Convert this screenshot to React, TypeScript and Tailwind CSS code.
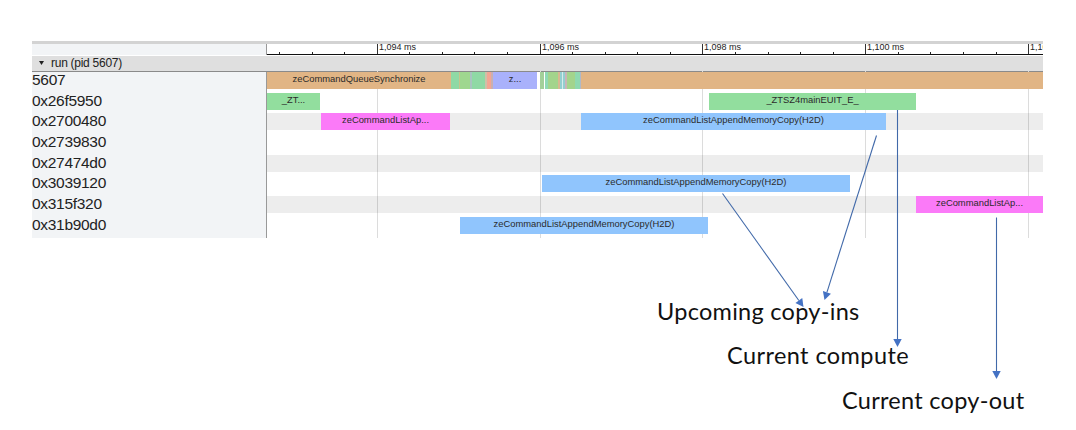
import React from "react";

type Bar = { gap: string; width: string; color: string; label?: string };
type Lane = { id: string; stripe: string; bars: Bar[] };

const blue = "bg-[#90c5fd]";
const green = "bg-[#92de9e]";
const pink = "bg-[#fb7af8]";
const copy = "zeCommandListAppendMemoryCopy(H2D)";

const lanes: Lane[] = [
  {
    id: "5607",
    stripe: "bg-transparent",
    bars: [
      { gap: "ml-0", width: "w-[184px]", color: "bg-[#e1b585]", label: "zeCommandQueueSynchronize" },
      { gap: "ml-0", width: "w-[8px]", color: "bg-[#8fd9a5]" },
      { gap: "ml-0", width: "w-[1px]", color: "bg-[#c5c48c]" },
      { gap: "ml-0", width: "w-[10px]", color: "bg-[#9fd78f]" },
      { gap: "ml-0", width: "w-[2px]", color: "bg-[#a8c4c0]" },
      { gap: "ml-0", width: "w-[13px]", color: "bg-[#8fd9a5]" },
      { gap: "ml-0", width: "w-[2px]", color: "bg-[#cfc0a8]" },
      { gap: "ml-0", width: "w-[4px]", color: "bg-[#f3a593]" },
      { gap: "ml-0", width: "w-[2px]", color: "bg-[#c9b0b0]" },
      { gap: "ml-0", width: "w-[44px]", color: "bg-[#a9b1fb]", label: "z..." },
      { gap: "ml-[3px]", width: "w-[4px]", color: "bg-[#a3d09a]" },
      { gap: "ml-[1px]", width: "w-[3px]", color: "bg-[#8fd9b5]" },
      { gap: "ml-0", width: "w-[10px]", color: "bg-[#a3d48c]" },
      { gap: "ml-0", width: "w-[2px]", color: "bg-[#d8b890]" },
      { gap: "ml-0", width: "w-[2px]", color: "bg-[#93cfd0]" },
      { gap: "ml-0", width: "w-[1px]", color: "bg-[#d5ecec]" },
      { gap: "ml-0", width: "w-[2px]", color: "bg-[#93cfd0]" },
      { gap: "ml-0", width: "w-[2px]", color: "bg-[#c8b4b8]" },
      { gap: "ml-0", width: "w-[8px]", color: "bg-[#a3d48c]" },
      { gap: "ml-0", width: "w-[5px]", color: "bg-[#8fd9b0]" },
      { gap: "ml-0", width: "w-[1px]", color: "bg-[#b0b8c8]" },
      { gap: "ml-0", width: "w-[462px]", color: "bg-[#e1b585]" },
    ],
  },
  {
    id: "0x26f5950",
    stripe: "bg-transparent",
    bars: [
      { gap: "ml-0", width: "w-[53px]", color: green, label: "_ZT..." },
      { gap: "ml-[389px]", width: "w-[207px]", color: green, label: "_ZTSZ4mainEUIT_E_" },
    ],
  },
  {
    id: "0x2700480",
    stripe: "bg-black/[0.07]",
    bars: [
      { gap: "ml-[54px]", width: "w-[129px]", color: pink, label: "zeCommandListAp..." },
      { gap: "ml-[131px]", width: "w-[305px]", color: blue, label: copy },
    ],
  },
  { id: "0x2739830", stripe: "bg-transparent", bars: [] },
  { id: "0x27474d0", stripe: "bg-black/[0.07]", bars: [] },
  {
    id: "0x3039120",
    stripe: "bg-transparent",
    bars: [{ gap: "ml-[275px]", width: "w-[308px]", color: blue, label: copy }],
  },
  {
    id: "0x315f320",
    stripe: "bg-black/[0.07]",
    bars: [{ gap: "ml-[649px]", width: "w-[127px]", color: pink, label: "zeCommandListAp..." }],
  },
  {
    id: "0x31b90d0",
    stripe: "bg-transparent",
    bars: [{ gap: "ml-[193px]", width: "w-[248px]", color: blue, label: copy }],
  },
];

const majors = [
  { x: 110, label: "1,094 ms" },
  { x: 273, label: "1,096 ms" },
  { x: 435, label: "1,098 ms" },
  { x: 598, label: "1,100 ms" },
  { x: 761, label: "1,102 ms" },
];
const minors = Array.from({ length: 24 }, (_, i) => Math.round(12 + i * 32.57));

function Ruler() {
  return (
    <svg width="776" height="11" className="block" fontFamily="Liberation Sans, sans-serif" fontSize="9">
      {minors.map((x) => (
        <rect key={x} x={x} y="8" width="1" height="3" fill="#222" />
      ))}
      {majors.map(({ x, label }) => (
        <g key={x}>
          <rect x={x} y="0" width="1" height="11" fill="#333" />
          <text x={x + 2} y="6" fill="#222">
            {label}
          </text>
        </g>
      ))}
      <rect x="0" y="10" width="776" height="1" fill="#111" />
    </svg>
  );
}

function Gridlines() {
  return (
    <svg className="absolute left-0 -top-px -z-10" width="776" height="167">
      {majors.map(({ x }) => (
        <rect key={x} x={x} y="0" width="1" height="167" fill="#dcdcdc" />
      ))}
    </svg>
  );
}

function Track({ lane }: { lane: Lane }) {
  return (
    <div className="h-[20.7px]">
      <div className={`flex h-[17px] overflow-hidden ${lane.stripe}`}>
        {lane.bars.map((b, i) => (
          <div
            key={i}
            className={`h-[17px] shrink-0 overflow-hidden whitespace-nowrap text-center text-[9.4px] leading-[14.5px] text-[#2b2b2b] ${b.gap} ${b.width} ${b.color}`}
          >
            {b.label}
          </div>
        ))}
      </div>
    </div>
  );
}

function Arrows() {
  const arrows = [
    [722.5, 193.5, 803.5, 307],
    [876.5, 135.5, 824.5, 300],
    [897.5, 110, 897.5, 347],
    [996.5, 217.5, 996.5, 379],
  ];
  return (
    <svg className="pointer-events-none absolute inset-0" width="1076" height="430">
      {arrows.map(([x1, y1, x2, y2], i) => {
        const len = Math.hypot(x2 - x1, y2 - y1);
        const ux = (x2 - x1) / len;
        const uy = (y2 - y1) / len;
        const bx = x2 - ux * 8;
        const by = y2 - uy * 8;
        return (
          <g key={i}>
            <line x1={x1} y1={y1} x2={bx} y2={by} stroke="#4169a9" strokeWidth="1.1" />
            <polygon
              points={`${x2},${y2} ${bx - uy * 4.2},${by + ux * 4.2} ${bx + uy * 4.2},${by - ux * 4.2}`}
              fill="#4472c4"
            />
          </g>
        );
      })}
    </svg>
  );
}

export default function App() {
  return (
    <div className="relative h-[430px] w-[1076px] overflow-hidden bg-white pl-8 pt-[41px] font-['Liberation_Sans',sans-serif]">
      <div className="w-[1011px]">
        <div className="h-[3px] bg-[#d3d3d3]" />
        <div className="flex h-[12px]">
          <div className="h-[11px] w-[235px] shrink-0 border-r border-[#999] bg-[#f2f4f6]" />
          <Ruler />
        </div>
        <div className="flex h-[16px] items-center border-b border-[#8a8a8a] bg-[#dfdfdf] pb-[2px] pl-[7px] text-[12px] leading-[14px] text-[#222]">
          <svg width="5" height="4" className="mr-[7px]">
            <path d="M0 0H5L2.5 4Z" fill="#222" />
          </svg>
          <span className="tracking-[-0.27px]">run (pid 5607)</span>
        </div>
        <div className="flex h-[166px]">
          <div className="w-[235px] shrink-0 border-r border-[#999] bg-[#f2f4f6] text-[15.5px] leading-[15px] tracking-[-0.3px] text-[#222]">
            {lanes.map((lane) => (
              <div key={lane.id} className="h-[20.7px]">
                {lane.id}
              </div>
            ))}
          </div>
          <div className="relative isolate w-[776px]">
            <Gridlines />
            {lanes.map((lane) => (
              <Track key={lane.id} lane={lane} />
            ))}
          </div>
        </div>
      </div>
      <div className="flex flex-col pt-[51px] font-[Lato,sans-serif] text-[23.5px] leading-[44.4px] tracking-[0.28px] text-[#111]">
        <span className="ml-[625px]">Upcoming copy-ins</span>
        <span className="ml-[695px] tracking-[0.42px]">Current compute</span>
        <span className="ml-[810px]">Current copy-out</span>
      </div>
      <Arrows />
    </div>
  );
}
